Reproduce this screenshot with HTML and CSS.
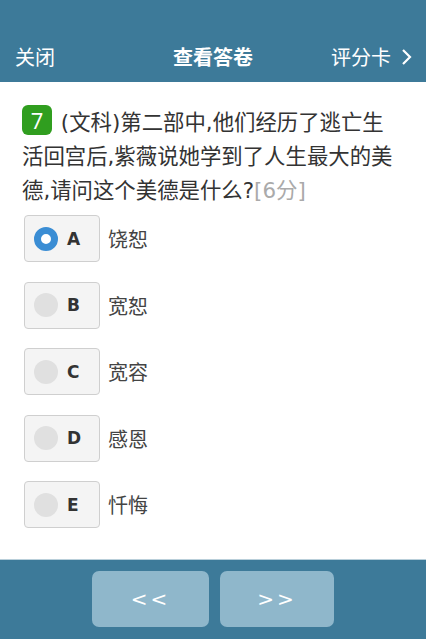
FILE: index.html
```html
<!DOCTYPE html>
<html lang="zh">
<head>
<meta charset="utf-8">
<link rel="stylesheet" href="styles.css">
</head>
<body>
<div class="page">
  <header class="topbar">
    <span class="left">关闭</span>
    <span class="title">查看答卷</span>
    <span class="right">评分卡<svg class="chev" width="14" height="18" viewBox="0 0 14 18"><path d="M4 2 L11 9 L4 16" fill="none" stroke="#fff" stroke-width="2.2"/></svg></span>
  </header>
  <main class="content">
    <p class="question"><span class="num">7</span> (文科)第二部中,他们经历了逃亡生活回宫后,紫薇说她学到了人生最大的美德,请问这个美德是什么?<span class="score">[6分]</span></p>
    <ul class="options">
      <li class="option"><span class="box"><span class="radio checked"></span><span class="letter">A</span></span><span class="label">饶恕</span></li>
      <li class="option"><span class="box"><span class="radio"></span><span class="letter">B</span></span><span class="label">宽恕</span></li>
      <li class="option"><span class="box"><span class="radio"></span><span class="letter">C</span></span><span class="label">宽容</span></li>
      <li class="option"><span class="box"><span class="radio"></span><span class="letter">D</span></span><span class="label">感恩</span></li>
      <li class="option"><span class="box"><span class="radio"></span><span class="letter">E</span></span><span class="label">忏悔</span></li>
    </ul>
  </main>
  <footer class="bottombar">
    <button class="nav prev">&lt;&lt;</button>
    <button class="nav next">&gt;&gt;</button>
  </footer>
</div>
</body>
</html>
```
FILE: styles.css
```css
* { box-sizing: border-box; }
html, body { margin: 0; padding: 0; }
body {
  font-family: "Noto Sans CJK SC", "Noto Sans", sans-serif;
  background: #fff;
  color: #333;
}
.page {
  width: 426px;
  height: 639px;
  display: flex;
  flex-direction: column;
  overflow: hidden;
}
.topbar {
  height: 82px;
  background: #3d7a99;
  color: #fff;
  display: flex;
  align-items: flex-end;
  justify-content: space-between;
  padding: 0 15px 13px 15px;
  font-size: 20px;
  line-height: 24px;
  position: relative;
  flex: none;
}
.topbar .title {
  position: absolute;
  left: 0;
  right: 0;
  bottom: 13px;
  text-align: center;
  font-weight: bold;
}
.topbar .left { position: relative; z-index: 1; }
.topbar .right {
  display: flex;
  align-items: center;
  gap: 8px;
  margin-right: -2px;
  position: relative;
  z-index: 1;
}
.chev { display: block; }
.content {
  flex: 1;
  padding: 23px 29px 0 22px;
}
.question {
  margin: 0;
  font-family: "DejaVu Sans", "Noto Sans CJK SC", sans-serif;
  font-size: 21.4px;
  line-height: 34px;
  color: #333;
}
.num {
  display: inline-block;
  width: 30px;
  height: 30px;
  line-height: 30px;
  text-align: center;
  background: #309e1f;
  color: #fff;
  border-radius: 6px;
  font-family: "Open Sans", sans-serif;
  font-size: 22px;
  vertical-align: 1px;
  margin-right: 2px;
}
.score { color: #aaa; }
.options {
  list-style: none;
  margin: 7px 0 0 0;
  padding: 0 0 0 2px;
}
.option {
  display: flex;
  align-items: center;
  height: 47px;
  margin-bottom: 19.6px;
}
.box {
  width: 76px;
  height: 47px;
  border: 1.5px solid #cfcfcf;
  border-radius: 4px;
  background: #f4f4f4;
  display: flex;
  align-items: center;
  padding-left: 9px;
}
.radio {
  width: 24px;
  height: 24px;
  border-radius: 50%;
  background: #e0e0e0;
  flex: none;
}
.radio.checked {
  background: #fff;
  border: 7px solid #3a8dd4;
}
.letter {
  margin-left: 9px;
  font-family: "DejaVu Sans", sans-serif;
  font-weight: bold;
  font-size: 17px;
  color: #333;
}
.label {
  margin-left: 8px;
  font-size: 20px;
  color: #444;
}
.bottombar {
  flex: none;
  height: 80px;
  background: #3d7a99;
  border-top: 1px solid #b9cfda;
  display: flex;
  justify-content: center;
  gap: 11px;
  padding-top: 11px;
}
.nav {
  height: 56px;
  border: none;
  border-radius: 7px;
  background: #8fb7cb;
  color: #fff;
  font-family: "DejaVu Sans", sans-serif;
  font-size: 20px;
  letter-spacing: 3px;
  padding: 0;
}
.prev { width: 117px; }
.next { width: 114px; }
```
